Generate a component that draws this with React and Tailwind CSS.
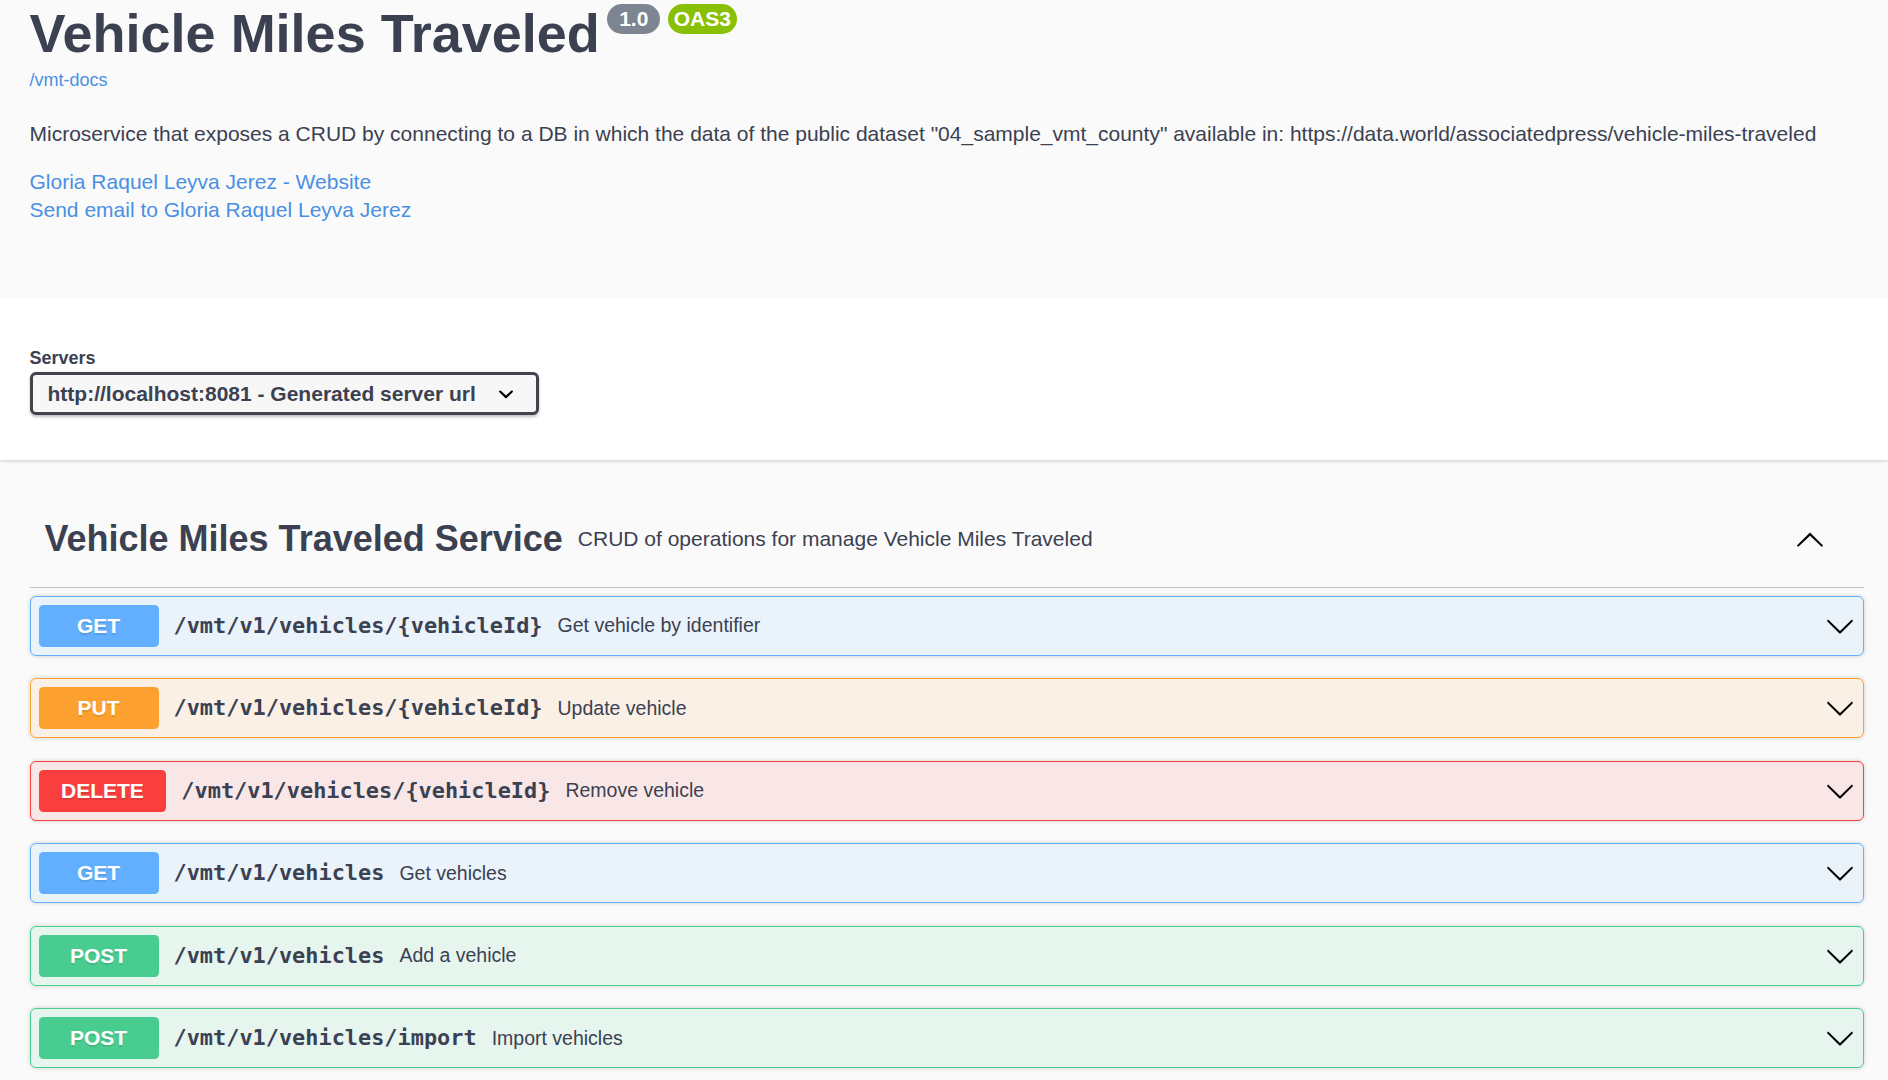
import React from "react";

const STYLES = {
  get: {
    box: "border-[#61affe] bg-[rgba(97,175,254,0.1)]",
    method: "bg-[#61affe]",
  },
  put: {
    box: "border-[#fca130] bg-[rgba(252,161,48,0.1)]",
    method: "bg-[#fca130]",
  },
  delete: {
    box: "border-[#f93e3e] bg-[rgba(249,62,62,0.1)]",
    method: "bg-[#f93e3e]",
  },
  post: {
    box: "border-[#49cc90] bg-[rgba(73,204,144,0.1)]",
    method: "bg-[#49cc90]",
  },
};

const OPS = [
  { m: "GET", k: "get", path: "/vmt/v1/vehicles/{vehicleId}", d: "Get vehicle by identifier" },
  { m: "PUT", k: "put", path: "/vmt/v1/vehicles/{vehicleId}", d: "Update vehicle" },
  { m: "DELETE", k: "delete", path: "/vmt/v1/vehicles/{vehicleId}", d: "Remove vehicle" },
  { m: "GET", k: "get", path: "/vmt/v1/vehicles", d: "Get vehicles" },
  { m: "POST", k: "post", path: "/vmt/v1/vehicles", d: "Add a vehicle" },
  { m: "POST", k: "post", path: "/vmt/v1/vehicles/import", d: "Import vehicles" },
];

function ArrowDown() {
  return (
    <svg width="30" height="30" viewBox="0 0 20 20" className="shrink-0" aria-hidden="true">
      <path
        fill="#000"
        d="M17.418 6.109c.272-.268.709-.268.979 0s.271.701 0 .969l-7.908 7.83c-.27.268-.707.268-.979 0l-7.908-7.83c-.27-.268-.27-.701 0-.969.271-.268.709-.268.979 0L10 13.25l7.418-7.141z"
      />
    </svg>
  );
}

function ArrowUp() {
  return (
    <svg width="30" height="30" viewBox="0 0 20 20" className="shrink-0" aria-hidden="true">
      <path
        fill="#000"
        d="M17.418 14.908c.272.268.709.268.979 0s.271-.701 0-.969l-7.908-7.83c-.27-.268-.707-.268-.979 0l-7.908 7.83c-.27.268-.27.701 0 .969.271.268.709.268.979 0L10 7.75l7.418 7.158z"
      />
    </svg>
  );
}

function Op({ op }) {
  const s = STYLES[op.k];
  return (
    <div
      className={`flex items-center h-[60px] border rounded-[6px] pl-[8px] pr-[8px] shadow-[0_0_4.5px_rgba(0,0,0,0.19)] ${s.box}`}
    >
      <span
        className={`flex items-center justify-center min-w-[120px] h-[42px] px-[22.5px] rounded-[4.5px] text-white font-bold text-[21px] [text-shadow:0_1.5px_0_rgba(0,0,0,0.1)] ${s.method}`}
      >
        {op.m}
      </span>
      <span className="px-[15px] pt-[1px] font-['DejaVu_Sans_Mono',monospace] font-bold text-[21.9px] text-[#3b4151] whitespace-nowrap">
        {op.path}
      </span>
      <span className="pt-[1px] text-[19.5px] text-[#3b4151] whitespace-nowrap">{op.d}</span>
      <span className="ml-auto flex items-center">
        <ArrowDown />
      </span>
    </div>
  );
}

export default function App() {
  return (
    <div className="min-h-screen bg-[#fafafa] text-[#3b4151] font-['Liberation_Sans',Arial,sans-serif]">
      {/* Info */}
      <section className="h-[298px] pt-[2px] pl-[29.5px] pr-[24px]">
        <div className="flex items-start">
          <h2 className="text-[54px] leading-[62px] font-bold text-[#3b4151] whitespace-nowrap">
            Vehicle Miles Traveled
          </h2>
          <span className="ml-[7.5px] mt-[2px] h-[30px] px-[6px] rounded-full bg-[#7d8492] text-white text-[21px] font-bold leading-[30px] whitespace-pre">
            {" 1.0 "}
          </span>
          <span className="ml-[7.5px] mt-[2px] h-[30px] px-[6px] rounded-full bg-[#89bf04] text-white text-[21px] font-bold leading-[30px] whitespace-pre">
            OAS3
          </span>
        </div>
        <a className="block w-fit mt-[6px] text-[18px] leading-[21px] text-[#4990e2]">/vmt-docs</a>
        <p className="mt-[31.2px] text-[21px] leading-[24px] text-[#3b4151] whitespace-nowrap">
          Microservice that exposes a CRUD by connecting to a DB in which the data of the public dataset
          "04_sample_vmt_county" available in: https://data.world/associatedpress/vehicle-miles-traveled
        </p>
        <div className="mt-[21.5px] text-[21px] leading-[28px] text-[#4990e2]">
          <div>
            <a>Gloria Raquel Leyva Jerez - Website</a>
          </div>
          <div>
            <a>Send email to Gloria Raquel Leyva Jerez</a>
          </div>
        </div>
      </section>

      {/* Servers */}
      <section className="bg-white shadow-[0_1.5px_3px_0_rgba(0,0,0,0.15)] pt-[50px] pb-[45px] pl-[29.5px] pr-[24px]">
        <label className="block text-[18px] leading-[21px] font-bold text-[#3b4151]">Servers</label>
        <div className="mt-[3px] flex w-fit items-center h-[43px] border-[3px] border-[#41444e] rounded-[6px] bg-[#f7f7f7] pl-[15px] pr-[15px] gap-[15px] shadow-[0_1.5px_3px_0_rgba(0,0,0,0.25)]">
          <span className="text-[21px] font-bold text-[#3b4151] whitespace-nowrap">
            http://localhost:8081 - Generated server url
          </span>
          <svg width="30" height="30" viewBox="0 0 20 20" aria-hidden="true">
            <path
              fill="#000"
              d="M13.418 7.859a.695.695 0 01.978 0 .68.68 0 010 .969l-3.908 3.83a.697.697 0 01-.979 0l-3.908-3.83a.68.68 0 010-.969.695.695 0 01.978 0L10 11l3.418-3.141z"
            />
          </svg>
        </div>
      </section>

      {/* Tag section */}
      <section className="mt-[30px] pl-[29.5px] pr-[24px] pb-[20px]">
        <div className="flex items-center h-[98px] pl-[15px] pr-[30px] border-b border-[rgba(59,65,81,0.3)] mb-[7.5px]">
          <span className="text-[36px] leading-[41px] font-bold text-[#3b4151] whitespace-nowrap">
            Vehicle Miles Traveled Service
          </span>
          <span className="flex-1 px-[15px] text-[21px] leading-[24px] text-[#3b4151] whitespace-nowrap">
            CRUD of operations for manage Vehicle Miles Traveled
          </span>
          <span className="flex items-center px-[9px]">
            <ArrowUp />
          </span>
        </div>
        <div className="flex flex-col gap-[22.5px]">
          {OPS.map((op, i) => (
            <Op key={i} op={op} />
          ))}
        </div>
      </section>
    </div>
  );
}
